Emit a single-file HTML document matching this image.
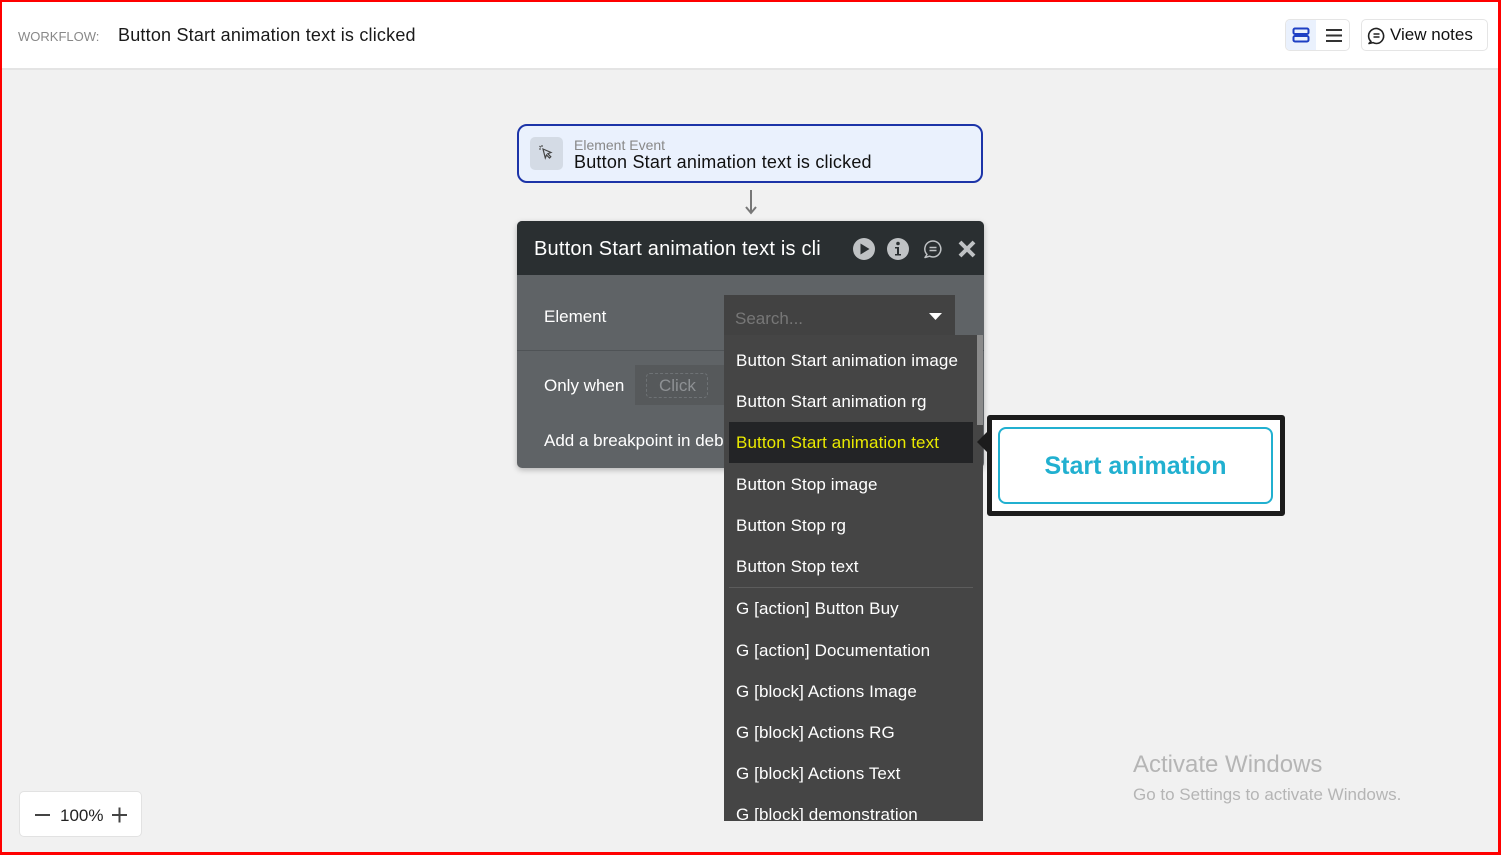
<!DOCTYPE html>
<html><head><meta charset="utf-8"><style>
*{box-sizing:border-box;margin:0;padding:0}
body{width:1501px;height:855px;overflow:hidden;background:#f1f1f1;font-family:"Liberation Sans",sans-serif;position:relative}
.frame{position:absolute;inset:0;border:2px solid #f00;border-right-width:3px;border-bottom-width:3px;pointer-events:none;z-index:10}
.top{position:absolute;left:0;top:0;width:1501px;height:70px;background:#fff;border-bottom:2px solid #e4e4e4}
.abs{position:absolute;white-space:nowrap}
.item{position:absolute;left:736px;font-size:17px;color:#fff;white-space:nowrap;letter-spacing:0.1px}
</style></head><body>
<div class="top"></div>
<div class="abs" style="left:18px;top:29px;font-size:13px;color:#888">WORKFLOW:</div>
<div class="abs" style="left:118px;top:25px;font-size:18px;color:#1a1a1a;letter-spacing:0.2px">Button Start animation text is clicked</div>
<div class="abs" style="left:1285px;top:19px;width:65px;height:32px;border:1px solid #e5e5e5;border-radius:5px;background:#fff"></div>
<div class="abs" style="left:1286px;top:20px;width:30px;height:30px;background:#eaf1fd;border-radius:4px 0 0 4px"></div>
<svg class="abs" style="left:1292px;top:27px" width="18" height="16"><rect x="1.5" y="1.5" width="15" height="5.5" rx="1.5" fill="none" stroke="#1d3fc4" stroke-width="2"/><rect x="1.5" y="9" width="15" height="5.5" rx="1.5" fill="none" stroke="#1d3fc4" stroke-width="2"/></svg>
<svg class="abs" style="left:1325px;top:28px" width="18" height="15"><path d="M1 2h16M1 7.5h16M1 13h16" stroke="#333" stroke-width="2"/></svg>
<div class="abs" style="left:1361px;top:19px;width:127px;height:32px;border:1px solid #e5e5e5;border-radius:5px;background:#fff"></div>
<svg class="abs" style="left:1367px;top:26px" width="19" height="19"><path d="M4 15.5A7.5 7.5 0 1 1 9.5 17.5 7.5 7.5 0 0 1 6 16.6L2 17.5z" fill="none" stroke="#222" stroke-width="1.6" stroke-linejoin="round"/><path d="M6.5 8h6M6.5 11h6" stroke="#222" stroke-width="1.5"/></svg>
<div class="abs" style="left:1390px;top:25px;font-size:17px;color:#111">View notes</div>

<div class="abs" style="left:517px;top:124px;width:466px;height:59px;border:2px solid #1c34a8;border-radius:10px;background:#eaf1fd"></div>
<div class="abs" style="left:530px;top:137px;width:33px;height:33px;background:#d4dbe5;border-radius:5px"></div>
<svg class="abs" style="left:537px;top:144px" width="18" height="18"><path d="M6 5l8 3.5-3.2 1.2 3 3-1.3 1.3-3-3L8.3 14z" fill="none" stroke="#444" stroke-width="1.2"/><path d="M2 5h2M5 1v2M2.5 2l1.3 1.3" stroke="#444" stroke-width="1.1"/></svg>
<div class="abs" style="left:574px;top:137px;font-size:14px;color:#888">Element Event</div>
<div class="abs" style="left:574px;top:152px;font-size:18px;color:#111;letter-spacing:0.2px">Button Start animation text is clicked</div>
<svg class="abs" style="left:743px;top:190px" width="16" height="26"><path d="M8 0v22M3 17l5 6 5-6" fill="none" stroke="#777" stroke-width="2"/></svg>

<div class="abs" style="left:517px;top:221px;width:467px;height:247px;background:#5f6366;border-radius:5px;box-shadow:0 2px 6px rgba(0,0,0,.25)"></div>
<div class="abs" style="left:517px;top:221px;width:467px;height:54px;background:#2a2f31;border-radius:5px 5px 0 0"></div>
<div class="abs" style="left:534px;top:238px;font-size:20px;color:#fff;width:287px;overflow:hidden;letter-spacing:0.2px">Button Start animation text is cli</div>
<svg class="abs" style="left:852px;top:237px" width="125" height="24"><circle cx="12" cy="12" r="11" fill="#bfc2c4"/><path d="M8.5 6.5v11l9-5.5z" fill="#2a2f31"/><circle cx="46" cy="12" r="11" fill="#bfc2c4"/><circle cx="46" cy="6.5" r="1.8" fill="#2a2f31"/><path d="M43 10h4v7h2v1.5h-6V17h2v-5.5h-2z" fill="#2a2f31"/><path d="M75 17.5A8 8 0 1 1 81 20a8 8 0 0 1-3.5-.8L73 20.5z" fill="none" stroke="#bfc2c4" stroke-width="1.5" stroke-linejoin="round"/><path d="M77.5 10.5h7M77.5 13.5h7" stroke="#bfc2c4" stroke-width="1.4"/><path d="M108 5l14 14M122 5l-14 14" stroke="#bfc2c4" stroke-width="4"/></svg>
<div class="abs" style="left:544px;top:307px;font-size:17px;color:#fff">Element</div>
<div class="abs" style="left:517px;top:350px;width:467px;height:1px;background:#4f5356"></div>
<div class="abs" style="left:544px;top:376px;font-size:17px;color:#fff">Only when</div>
<div class="abs" style="left:635px;top:365px;width:100px;height:40px;background:#56595b"></div>
<div class="abs" style="left:646px;top:373px;width:62px;height:25px;border:1px dashed #6e7275;border-radius:4px"></div>
<div class="abs" style="left:659px;top:376px;font-size:17px;color:#8e9194">Click</div>
<div class="abs" style="left:544px;top:431px;font-size:17px;color:#fff">Add a breakpoint in debug mode</div>

<div class="abs" style="left:724px;top:295px;width:231px;height:40px;background:#424242"></div>
<div class="abs" style="left:735px;top:309px;font-size:17px;color:#777">Search...</div>
<svg class="abs" style="left:929px;top:313px" width="13" height="8"><path d="M0 0h13L6.5 7z" fill="#fff"/></svg>
<div class="abs" style="left:724px;top:335px;width:259px;height:486px;background:#454545"></div>
<div class="abs" style="left:977px;top:335px;width:6px;height:90px;background:#8a8a8a"></div>
<div class="abs" style="left:729px;top:422px;width:244px;height:41px;background:#232426"></div>
<div class="item" style="top:351px">Button Start animation image</div>
<div class="item" style="top:392px">Button Start animation rg</div>
<div class="item" style="top:433px;color:#eaea00">Button Start animation text</div>
<div class="item" style="top:475px">Button Stop image</div>
<div class="item" style="top:516px">Button Stop rg</div>
<div class="item" style="top:557px">Button Stop text</div>
<div class="abs" style="left:729px;top:587px;width:244px;height:1px;background:#5c5c5c"></div>
<div class="item" style="top:599px">G [action] Button Buy</div>
<div class="item" style="top:641px">G [action] Documentation</div>
<div class="item" style="top:682px">G [block] Actions Image</div>
<div class="item" style="top:723px">G [block] Actions RG</div>
<div class="item" style="top:764px">G [block] Actions Text</div>
<div style="position:absolute;left:724px;top:795px;width:259px;height:26px;overflow:hidden"><div class="item" style="left:12px;top:10px">G [block] demonstration</div></div>

<svg class="abs" style="left:975px;top:430px" width="14" height="24"><path d="M14 0L2 12l12 12z" fill="#1c1c1c"/></svg>
<div class="abs" style="left:987px;top:415px;width:298px;height:101px;background:#fff;border:5px solid #1c1c1c;border-radius:3px"></div>
<div class="abs" style="left:998px;top:427px;width:275px;height:77px;border:2px solid #21b0d0;border-radius:8px;display:flex;align-items:center;justify-content:center;font-size:25px;font-weight:bold;color:#21b0d0;padding-top:2px">Start animation</div>

<div class="abs" style="left:1133px;top:751px;font-size:24px;color:#b5b5b5">Activate Windows</div>
<div class="abs" style="left:1133px;top:785px;font-size:17px;color:#b5b5b5">Go to Settings to activate Windows.</div>

<div class="abs" style="left:19px;top:791px;width:123px;height:46px;background:#fff;border:1px solid #e2e2e2;border-radius:5px"></div>
<svg class="abs" style="left:34px;top:807px" width="100" height="16"><path d="M1 8h15M78 8h15M85.5 0.5v15" stroke="#444" stroke-width="2"/></svg>
<div class="abs" style="left:60px;top:806px;font-size:17px;color:#222">100%</div>
<div class="frame"></div>
</body></html>
